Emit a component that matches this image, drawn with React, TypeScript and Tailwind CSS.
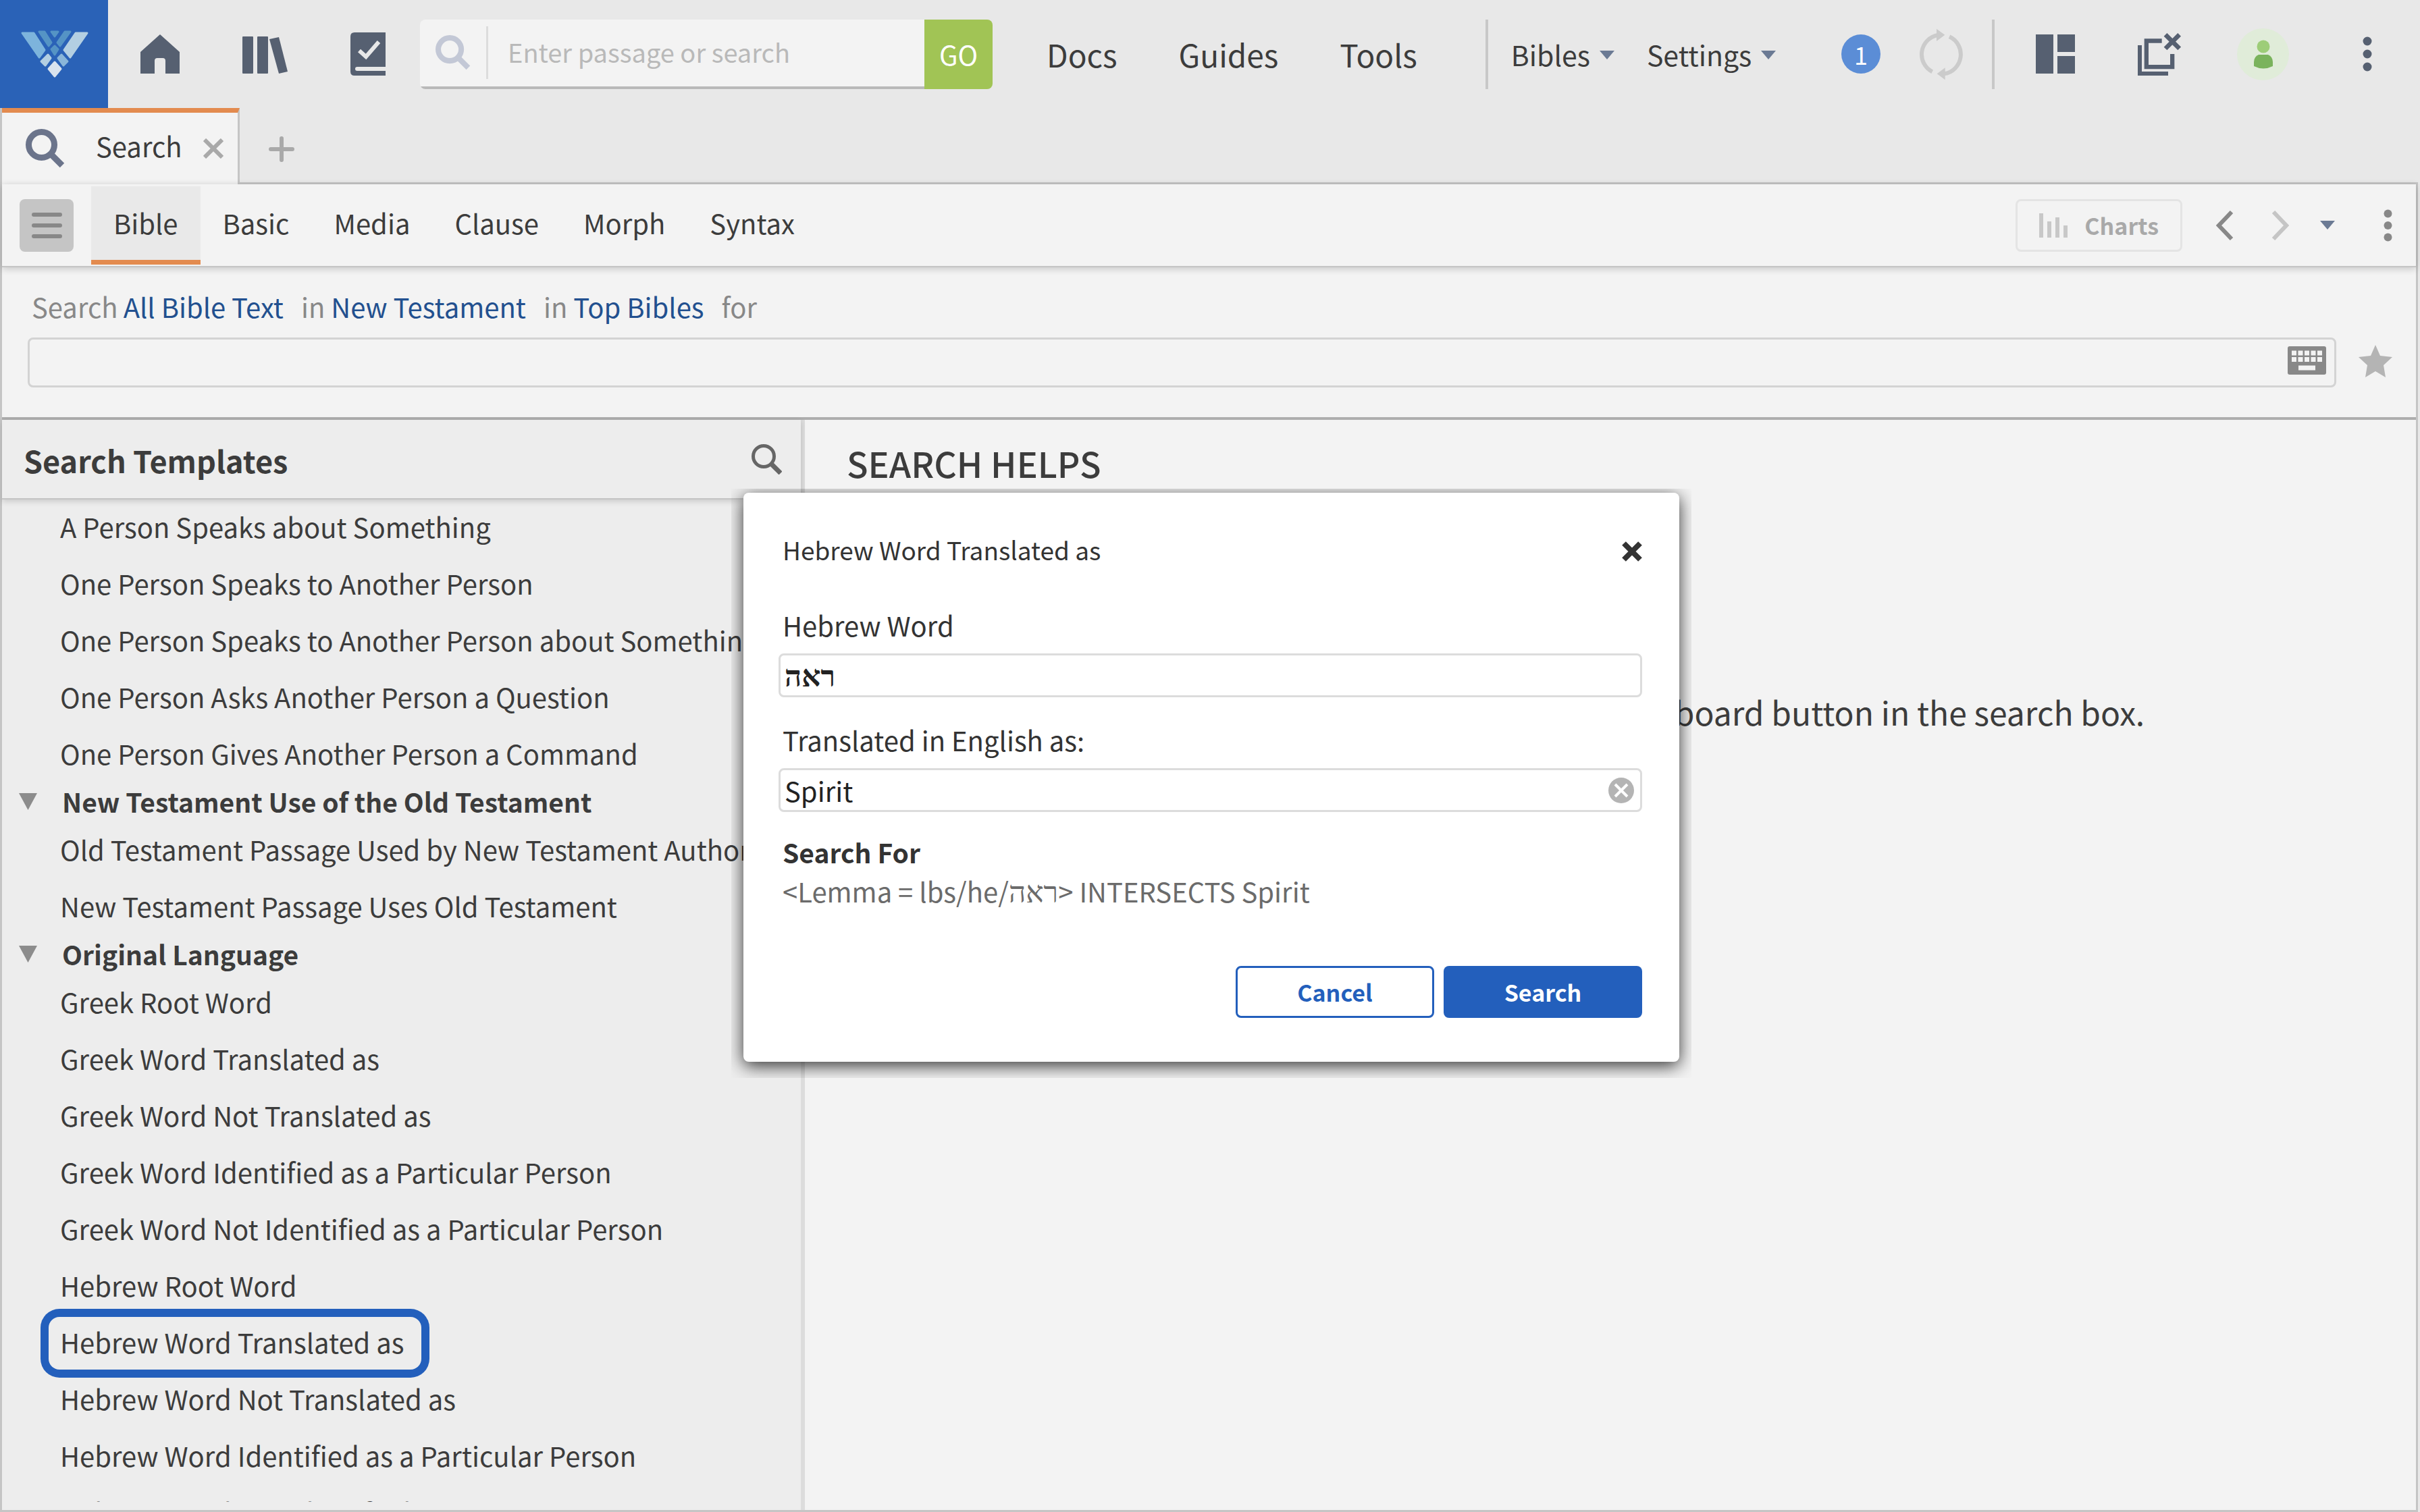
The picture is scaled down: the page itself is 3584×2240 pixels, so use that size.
import React, { useState } from "react";

type TemplateGroup = { title?: string; items: string[] };

const groups: TemplateGroup[] = [
  {
    items: [
      "A Person Speaks about Something",
      "One Person Speaks to Another Person",
      "One Person Speaks to Another Person about Something",
      "One Person Asks Another Person a Question",
      "One Person Gives Another Person a Command",
    ],
  },
  {
    title: "New Testament Use of the Old Testament",
    items: [
      "Old Testament Passage Used by New Testament Author",
      "New Testament Passage Uses Old Testament",
    ],
  },
  {
    title: "Original Language",
    items: [
      "Greek Root Word",
      "Greek Word Translated as",
      "Greek Word Not Translated as",
      "Greek Word Identified as a Particular Person",
      "Greek Word Not Identified as a Particular Person",
      "Hebrew Root Word",
      "Hebrew Word Translated as",
      "Hebrew Word Not Translated as",
      "Hebrew Word Identified as a Particular Person",
      "Hebrew Word Not Identified as a Particular Person",
    ],
  },
];

const searchTabs = ["Bible", "Basic", "Media", "Clause", "Morph", "Syntax"];

function Caret({ className = "" }: { className?: string }) {
  return (
    <svg
      viewBox="0 0 22 13"
      className={`w-[22px] h-[13px] shrink-0 text-[#6b7a94] ${className}`}
      fill="currentColor"
    >
      <path d="M0 0h22L11 13z" />
    </svg>
  );
}

function BoldSearchIcon({ className }: { className?: string }) {
  return (
    <svg viewBox="0 0 58 58" className={className} fill="none" stroke="currentColor">
      <circle cx="23.5" cy="23.5" r="19" strokeWidth="9" />
      <path d="M37 37 54 54" strokeWidth="9" />
    </svg>
  );
}

function Dots({ className }: { className?: string }) {
  return (
    <svg viewBox="0 0 14 52" className={className} fill="currentColor">
      <circle cx="7" cy="7" r="6.5" />
      <circle cx="7" cy="26" r="6.5" />
      <circle cx="7" cy="45" r="6.5" />
    </svg>
  );
}

function Logo() {
  return (
    <svg viewBox="0 0 160 160" className="w-full h-full" strokeLinejoin="round" strokeWidth="3">
      <path fill="#7db4dc" stroke="#7db4dc" d="M33 49h17l16 25-8 11z" />
      <path fill="#b3cfe2" stroke="#b3cfe2" d="M129 49h-17L95 74l9 11z" />
      <path fill="#5594c5" stroke="#5594c5" d="M58 47h8l10 16-4 5z" />
      <path fill="#5594c5" stroke="#5594c5" d="M104 47h-8L85 63l4 5z" />
      <path fill="#5594c5" stroke="#5594c5" d="M76 47h10l-5 7z" />
      <path fill="#5594c5" stroke="#5594c5" d="m81 68 5 5-5 8-5-8z" />
      <path fill="#b3cfe2" stroke="#b3cfe2" d="m71 81 4 5-8 11-6-6z" />
      <path fill="#8ab6d9" stroke="#8ab6d9" d="m91 81 9 10-6 6-8-11z" />
      <path fill="#d9e3ee" stroke="#d9e3ee" d="m81 92 9 10-9 11-9-11z" />
    </svg>
  );
}

function TopBar() {
  return (
    <header className="flex items-center h-[160px] shrink-0">
      <a href="#" aria-label="Home page" className="w-[160px] h-[160px] bg-[#2a62b7] shrink-0">
        <Logo />
      </a>
      <nav className="flex items-center text-[#566071] ml-[48px]">
        <button aria-label="Home">
          <svg viewBox="0 0 58 58" className="w-[58px] h-[58px]" fill="currentColor">
            <path d="M29 0 58 26v32H37V39q0-4-4-4h-8q-4 0-4 4v19H0V26z" />
          </svg>
        </button>
        <button aria-label="Library" className="ml-[93px] pt-1">
          <svg viewBox="0 0 68 56" className="w-[68px] h-[56px]" fill="currentColor">
            <rect width="16" height="55" rx="1" />
            <rect x="22" width="16" height="55" rx="1" />
            <path d="m40 4 14-3 13 51-13 3z" />
          </svg>
        </button>
        <button aria-label="Reading plan" className="ml-[92px]">
          <svg viewBox="0 0 52 64" className="w-[52px] h-[64px]">
            <path
              fill="currentColor"
              d="M6 0h46v51H10q-3 0-3 3t3 3h42v7H6q-6 0-6-6V6q0-6 6-6z"
            />
            <path fill="none" stroke="#e8e8e8" strokeWidth="6" d="m13 27 10 9 19-22" />
          </svg>
        </button>
      </nav>
      <form
        className="flex h-[103px] w-[848px] ml-[51px] rounded-lg overflow-hidden"
        onSubmit={(e) => e.preventDefault()}
      >
        <div className="flex flex-1 items-center bg-[#f3f3f3] border-b-4 border-[#b9b9b9] pl-[23px]">
          <BoldSearchIcon className="w-[52px] h-[52px] text-[#c3c8d6]" />
          <span className="w-[3px] h-[78px] bg-[#dcdcdc] ml-[23px]" />
          <input
            aria-label="Enter passage or search"
            placeholder="Enter passage or search"
            className="flex-1 min-w-0 ml-[29px] pb-1 bg-transparent text-[38px] placeholder:text-[#b9b9b9] outline-none"
          />
        </div>
        <button className="w-[101px] bg-[#a1c455] text-white text-[40px]">GO</button>
      </form>
      <nav className="flex items-center gap-[91px] text-[46px] ml-[80px]">
        <a href="#">Docs</a>
        <a href="#">Guides</a>
        <a href="#">Tools</a>
      </nav>
      <span className="w-[4px] h-[103px] bg-[#c8c8c8] ml-[101px]" />
      <button className="flex items-center gap-[14px] text-[41px] ml-[34px] pt-0.5">
        Bibles <Caret />
      </button>
      <button className="flex items-center gap-[14px] text-[41px] ml-[48px] pt-0.5">
        Settings <Caret />
      </button>

      {/* status and account */}
      <div className="flex items-center ml-auto text-[#566071]">
        <button className="w-[58px] h-[58px] rounded-full bg-[#5b8dd6] text-white text-[36px] leading-[56px]">
          1
        </button>
        <button aria-label="Sync" className="ml-[57px] text-[#cbcbcb]">
          <svg viewBox="66 36 195 231" className="w-[65px] h-[77px]">
            <g fill="none" stroke="currentColor" strokeWidth="18">
              <path d="M125 229a87 87 0 0 1 25-163" />
              <path d="M201 73a87 87 0 0 1-23 165" />
            </g>
            <path fill="currentColor" d="m144 38 37 27-37 28zM182 211l-36 27 36 27z" />
          </svg>
        </button>
        <span className="w-[4px] h-[103px] bg-[#c8c8c8] ml-[43px]" />
        <button aria-label="Layouts" className="ml-[61px]">
          <svg viewBox="0 0 58 58" className="w-[58px] h-[58px]" fill="currentColor">
            <path d="M0 0h26v58H0zM32 0h26v26H32zM32 32h26v26H32z" />
          </svg>
        </button>
        <button aria-label="Close all" className="ml-[93px]">
          <svg viewBox="1038 57 192 189" className="w-[64px] h-[63px]">
            <path
              fill="currentColor"
              d="M1038 111h18v117h117v18h-135zM1067 82h78v19h-59v97h96v-48h19v67h-134z"
            />
            <path stroke="currentColor" strokeWidth="20" d="m1161 64 62 62m0-62-62 62" />
          </svg>
        </button>
        <button
          aria-label="Account"
          className="flex items-center justify-center w-[77px] h-[77px] rounded-full bg-[#e0ecd9] ml-[83px]"
        >
          <svg viewBox="0 0 30 43" className="w-[30px] h-[43px]">
            <circle cx="15" cy="10" r="9.5" fill="#9dcd78" />
            <path fill="#7ab35c" d="M8 22h14q7 3 7 11v6q-14 7-28 0v-6q0-8 7-11z" />
          </svg>
        </button>
        <button aria-label="More" className="ml-[109px] mr-[71px]">
          <Dots className="w-[14px] h-[52px]" />
        </button>
      </div>
    </header>
  );
}

function TabStrip() {
  return (
    <div className="flex h-[113px] shrink-0 border-l-3 border-[#c5c5c5] mr-[3px]">
      <div className="flex items-center w-[352px] bg-[#f3f3f3] border-t-7 border-t-[#e38b4f] border-r-3 border-r-[#c5c5c5] pl-[35px]">
        <BoldSearchIcon className="w-[58px] h-[58px] text-[#6b748b]" />
        <span className="text-[40px] leading-[58px] ml-[46px] pb-2">Search</span>
        <button aria-label="Close tab" className="ml-[31px] text-[#a9a9a9]">
          <svg viewBox="0 0 30 30" className="w-[30px] h-[30px]" stroke="currentColor">
            <path strokeWidth="6" d="m2 2 26 26M28 2 2 28" />
          </svg>
        </button>
      </div>
      <div className="flex flex-1 items-center border-b-3 border-[#c5c5c5] pl-[43px]">
        <button aria-label="New tab" className="text-[#a9a9a9] pt-3">
          <svg
            viewBox="0 0 38 38"
            className="w-[38px] h-[38px]"
            stroke="currentColor"
            strokeLinecap="round"
          >
            <path strokeWidth="6" d="M19 3v32M3 19h32" />
          </svg>
        </button>
      </div>
    </div>
  );
}

function Toolbar() {
  const [tab, setTab] = useState("Bible");
  return (
    <div className="relative z-10 flex items-center h-[123px] shrink-0 bg-[#f3f3f3] border-b-2 border-[#c5c5c5] shadow-[0_2px_10px_rgba(0,0,0,0.2)] pl-[26px]">
      <button
        aria-label="Menu"
        className="flex items-center justify-center w-[80px] h-[78px] rounded-lg bg-[#c5c5c5] text-[#888]"
      >
        <svg
          viewBox="0 0 45 38"
          className="w-[45px] h-[38px]"
          stroke="currentColor"
          strokeLinecap="round"
        >
          <path strokeWidth="6" d="M3 3h39M3 19h39M3 35h39" />
        </svg>
      </button>
      <div className="flex text-[40px] leading-[58px] ml-[26px]">
        {searchTabs.map((t) => (
          <button
            key={t}
            onClick={() => setTab(t)}
            className={
              tab === t
                ? "h-[116px] px-[33px] bg-[#e9e9e9] border-b-7 border-[#e38b4f]"
                : "h-[116px] px-[33px] border-b-7 border-transparent"
            }
          >
            {t}
          </button>
        ))}
      </div>
      <button
        disabled
        className="flex items-center h-[78px] ml-auto px-[32px] border-3 border-[#e4e4e4] rounded-lg text-[34px] font-bold text-[#a9a9a9]"
      >
        <svg
          viewBox="0 0 43 36"
          className="w-[43px] h-[36px] mr-[24px] text-[#c8c8c8]"
          fill="currentColor"
        >
          <path d="M0 0h6v36H0zM12 12h6v24h-6zM24 6h6v30h-6zM36 18h6v18h-6z" />
        </svg>
        Charts
      </button>
      <button aria-label="Back" className="ml-[50px] text-[#888]">
        <svg viewBox="0 0 26 44" className="w-[26px] h-[44px]" fill="none" stroke="currentColor">
          <path strokeWidth="6" d="M23 2 4 22l19 20" />
        </svg>
      </button>
      <button aria-label="Forward" className="ml-[56px] text-[#c5c5c5]">
        <svg viewBox="0 0 26 44" className="w-[26px] h-[44px]" fill="none" stroke="currentColor">
          <path strokeWidth="6" d="m3 2 19 20L3 42" />
        </svg>
      </button>
      <button aria-label="History" className="ml-[46px]">
        <Caret />
      </button>
      <button aria-label="Panel menu" className="ml-[72px] mr-[35px] text-[#888]">
        <Dots className="w-[13px] h-[48px]" />
      </button>
    </div>
  );
}

function QueryBar() {
  return (
    <div className="shrink-0 border-b-4 border-[#adadad] pl-[38px] pr-[35px] pt-[29px] pb-[44px]">
      <div className="flex text-[40px] leading-[58px] text-[#888] pl-1.5">
        <span>Search</span>
        <a href="#" className="ml-2 text-[#22508f]">
          All Bible Text
        </a>
        <span className="ml-[26px]">in</span>
        <a href="#" className="ml-[9px] text-[#22508f]">
          New Testament
        </a>
        <span className="ml-[26px]">in</span>
        <a href="#" className="ml-[9px] text-[#22508f]">
          Top Bibles
        </a>
        <span className="ml-[26px]">for</span>
      </div>
      <div className="flex items-center mt-[17px]">
        <div className="flex flex-1 items-center h-[74px] border-3 border-[#d3d3d3] rounded-lg pr-[12px]">
          <input
            aria-label="Search query"
            className="flex-1 min-w-0 h-full px-4 bg-transparent text-[40px] outline-none"
          />
          <button aria-label="Keyboard" className="text-[#888] pb-1.5">
            <svg viewBox="0 0 57 42" className="w-[57px] h-[42px]">
              <rect width="57" height="42" rx="3" fill="currentColor" />
              <path
                stroke="#f3f3f3"
                strokeWidth="7"
                strokeDasharray="7 2.5"
                d="M6 10h45M6 19.5h45"
              />
              <path stroke="#f3f3f3" strokeWidth="7" d="M16 32h25" />
            </svg>
          </button>
        </div>
        <button aria-label="Favorite" className="ml-[33px] text-[#b4b4b4] pb-1">
          <svg viewBox="0 0 50 48" className="w-[50px] h-[48px]" fill="currentColor">
            <path d="m25 0 7 16 18 2-13 12 3 18-15-9-15 9 3-18L0 18l18-2z" />
          </svg>
        </button>
      </div>
    </div>
  );
}

function Templates({
  selected,
  onSelect,
}: {
  selected: string;
  onSelect: (name: string) => void;
}) {
  return (
    <aside className="flex flex-col w-1/3 max-w-[1189px] bg-[#ededed] border-r-6 border-[#dcdcdc] pb-[12px]">
      <div className="relative z-10 flex items-center h-[118px] shrink-0 border-b-2 border-[#c5c5c5] bg-[#ededed] shadow-[0_3px_8px_rgba(0,0,0,0.15)] pl-[32px] pr-[28px]">
        <h2 className="text-[45px] font-bold pt-1">Search Templates</h2>
        <button aria-label="Filter templates" className="ml-auto text-[#666]">
          <svg viewBox="0 0 45 45" className="w-[45px] h-[45px]" fill="none" stroke="currentColor">
            <circle cx="18" cy="18" r="15.5" strokeWidth="5" />
            <path d="m29 29 14 14" strokeWidth="7" />
          </svg>
        </button>
      </div>
      <div className="flex-1 min-h-0 overflow-hidden text-[40px] leading-[58px]">
        {groups.map((group) => (
          <section key={group.title ?? "people"}>
            {group.title && (
              <h3 className="flex items-center h-[58px] pl-[25px] pb-1 text-[39px] font-bold">
                <svg
                  viewBox="0 0 27 25"
                  className="w-[27px] h-[25px] mr-[37px] text-[#8c8c8c]"
                  fill="currentColor"
                >
                  <path d="M0 0h27L13.5 25z" />
                </svg>
                {group.title}
              </h3>
            )}
            <ul>
              {group.items.map((item) => (
                <li key={item} className="flex items-center h-[84px] pl-[69px]">
                  <button
                    onClick={() => onSelect(item)}
                    className={
                      item === selected
                        ? "h-[78px] pl-[17px] pr-[25px] pb-1 rounded-2xl ring-12 ring-[#235fbc] whitespace-nowrap"
                        : "h-[78px] px-[17px] pb-1 whitespace-nowrap"
                    }
                  >
                    {item}
                  </button>
                </li>
              ))}
            </ul>
          </section>
        ))}
      </div>
    </aside>
  );
}

function TemplateDialog({ title }: { title: string }) {
  const [hebrew, setHebrew] = useState("ראה");
  const [english, setEnglish] = useState("Spirit");
  return (
    <div className="absolute z-20 inset-x-0 top-[724px] flex justify-center pl-1">
      {/* the shadow is cut off a short way from the dialog */}
      <div className="overflow-hidden pt-[6px] px-[18px] pb-[24px]">
        <div
          role="dialog"
          aria-label={title}
          className="w-[1386px] bg-white rounded-lg shadow-[0_6px_26px_rgba(0,0,0,0.8)] text-[40px] leading-[58px] text-[#333] pt-[55px] pb-[65px] pl-[52px] pr-[55px]"
        >
          <div className="flex items-center justify-between pl-[6px]">
            <h2 className="text-[37px]">{title}</h2>
            <button aria-label="Close" className="pt-1.5">
              <svg viewBox="0 0 30 30" className="w-[30px] h-[30px]" stroke="currentColor">
                <path strokeWidth="8" d="m3 3 24 24M27 3 3 27" />
              </svg>
            </button>
          </div>
          <label htmlFor="hebrew" className="block mt-[54px] pl-[6px]">
            Hebrew Word
          </label>
          <input
            id="hebrew"
            value={hebrew}
            onChange={(e) => setHebrew(e.target.value)}
            className="block w-full h-[65px] mt-[13px] px-[6px] pt-1 border-3 border-[#dcdcdc] rounded-lg text-[44px] text-[#222] font-['Liberation_Serif',serif] font-bold outline-none"
          />
          <label htmlFor="english" className="block mt-[34px] pl-[6px]">
            Translated in English as:
          </label>
          <div className="flex items-center h-[65px] mt-[13px] pl-[6px] pr-[9px] border-3 border-[#dcdcdc] rounded-lg">
            <input
              id="english"
              value={english}
              onChange={(e) => setEnglish(e.target.value)}
              className="flex-1 min-w-0 h-full text-[#222] outline-none"
            />
            <button aria-label="Clear" onClick={() => setEnglish("")}>
              <svg viewBox="0 0 38 38" className="w-[38px] h-[38px]">
                <circle cx="19" cy="19" r="19" fill="#b4b4b4" />
                <path stroke="#fff" strokeWidth="4" d="m10 10 18 18M28 10 10 28" />
              </svg>
            </button>
          </div>
          <h3 className="mt-[30px] pl-[6px] text-[39px] font-bold">Search For</h3>
          <p className="pl-[6px] text-[#6b6b6b]">
            &lt;Lemma = lbs/he/
            <span className="font-['Liberation_Serif',serif] text-[44px]">{hebrew}</span>
            &gt; INTERSECTS {english}
          </p>
          <div className="flex justify-end gap-[14px] mt-[79px] text-[34px] leading-[52px] font-bold">
            <button className="w-[294px] h-[77px] border-3 border-[#235fbc] rounded-lg text-[#235fbc]">
              Cancel
            </button>
            <button className="w-[294px] h-[77px] bg-[#235fbc] rounded-lg text-white">
              Search
            </button>
          </div>
        </div>
      </div>
    </div>
  );
}

export default function App() {
  const [selected, setSelected] = useState("Hebrew Word Translated as");
  return (
    <div className="relative flex flex-col h-screen overflow-hidden bg-[#e8e8e8] text-[#3c3c3c] font-['Noto_Sans_CJK_SC',sans-serif]">
      <TopBar />
      <TabStrip />
      <div className="flex flex-col flex-1 min-h-0 bg-[#f3f3f3] border-3 border-t-0 border-[#c5c5c5] mr-[3px]">
        <Toolbar />
        <QueryBar />
        <div className="flex flex-1 min-h-0">
          <Templates selected={selected} onSelect={setSelected} />
          <main className="flex-1 pl-[62px] pr-[402px] pt-[32px] leading-[64px]">
            <h1 className="text-[52px] font-medium">SEARCH HELPS</h1>
            <p className="mt-[304px] text-right text-[48px]">
              keyboard button in the search box.
            </p>
          </main>
        </div>
      </div>
      <TemplateDialog title={selected} />
    </div>
  );
}
